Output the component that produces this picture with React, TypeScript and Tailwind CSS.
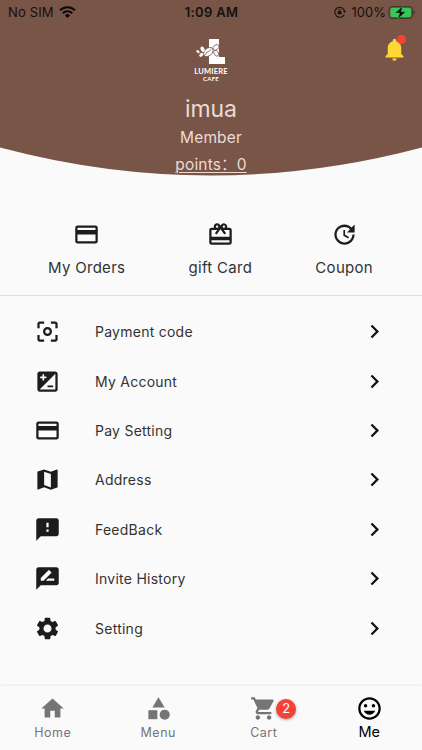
import type { IconType } from "react-icons";
import {
  MdCardGiftcard,
  MdCategory,
  MdCenterFocusWeak,
  MdChevronRight,
  MdCreditCard,
  MdFeedback,
  MdHome,
  MdIso,
  MdMap,
  MdNotifications,
  MdRateReview,
  MdSettings,
  MdShoppingCart,
  MdTagFaces,
  MdUpdate,
} from "react-icons/md";

type Item = { label: string; icon: IconType };

const shortcuts: Item[] = [
  { label: "My Orders", icon: MdCreditCard },
  { label: "gift Card", icon: MdCardGiftcard },
  { label: "Coupon", icon: MdUpdate },
];

const menu: Item[] = [
  { label: "Payment code", icon: MdCenterFocusWeak },
  { label: "My Account", icon: MdIso },
  { label: "Pay Setting", icon: MdCreditCard },
  { label: "Address", icon: MdMap },
  { label: "FeedBack", icon: MdFeedback },
  { label: "Invite History", icon: MdRateReview },
  { label: "Setting", icon: MdSettings },
];

const tabs: (Item & { badge?: number; active?: boolean })[] = [
  { label: "Home", icon: MdHome },
  { label: "Menu", icon: MdCategory },
  { label: "Cart", icon: MdShoppingCart, badge: 2 },
  { label: "Me", icon: MdTagFaces, active: true },
];

function StatusBar() {
  return (
    <div className="grid h-6 grid-cols-3 items-center pl-2 pr-[7px] text-[13px] leading-6 text-[#15100e]">
      <div className="flex items-center gap-[5px]">
        <span className="tracking-[0.15px]">No SIM</span>
        <svg width="17" height="12" viewBox="0 0 17 12" fill="none" stroke="#0c0908" strokeWidth="2.2">
          <path d="M1 4.3a10.8 10.8 0 0 1 15 0" />
          <path d="M3.7 7.2a6.9 6.9 0 0 1 9.6 0" />
          <path d="M8.5 12 5.9 9.4a3.7 3.7 0 0 1 5.2 0z" fill="#0c0908" stroke="none" />
        </svg>
      </div>
      <span className="text-center font-semibold tracking-[0.35px]">1:09 AM</span>
      <div className="flex items-center justify-end">
        <svg width="12" height="12" viewBox="0 0 12 12" fill="none" stroke="#15100e" strokeWidth="1.1">
          <path d="M10.3 8.4A5 5 0 1 1 10.6 5" />
          <path d="M9 5h3l-1.5 2z" fill="#15100e" stroke="none" />
          <rect x="3.7" y="5.2" width="3.8" height="3" fill="#15100e" stroke="none" />
          <path d="M4.5 5.3V4.4a1.1 1.1 0 0 1 2.2 0v.9" strokeWidth=".8" />
        </svg>
        <span className="ml-[6px] mr-[2px]">100%</span>
        <svg width="27" height="13" viewBox="0 0 27 13">
          <rect x="1" y=".6" width="23.4" height="11.8" rx="3" fill="none" stroke="#40302a" />
          <rect x="2.4" y="2" width="20.6" height="9" rx="1.8" fill="#35c759" />
          <path d="M25.6 4.4c1.6.6 1.6 3.6 0 4.2z" fill="#40302a" />
          <path d="M14.8 0 7.2 7h4.4L9.800 13 17.600 5.800h-4.400z" fill="#0c0908" stroke="#35c759" strokeWidth=".5" />
        </svg>
      </div>
    </div>
  );
}

function Logo() {
  return (
    <div className="flex flex-col items-center text-white">
      <svg width="30" height="26" viewBox="0 0 30 26" fill="#fff">
        <path d="M13 0h10v18h6v7H13z" />
        <g stroke="#795548" strokeWidth=".8">
          <ellipse cx="12.3" cy="13" rx="3.7" ry="5.4" transform="rotate(48 12.3 13)" />
          <ellipse cx="20" cy="8.4" rx="2.4" ry="3.3" transform="rotate(50 20 8.4)" />
          <ellipse cx="20.2" cy="14.2" rx="2.1" ry="3.2" transform="rotate(-35 20.2 14.2)" />
          <path d="M8.8 16c2-.8 1.2-3.2 3.4-3.4s1.2-1.7 3.2-2.4" fill="none" />
        </g>
        <ellipse cx="6.6" cy="10.2" rx="1.9" ry="2.8" transform="rotate(-25 6.6 10.2)" />
        <ellipse cx="5.3" cy="15.8" rx="1.7" ry="2.3" transform="rotate(50 5.3 15.8)" />
        <ellipse cx="2" cy="12.6" rx="1.2" ry="1.8" transform="rotate(-50 2 12.6)" />
      </svg>
      <span className="mt-[2px] font-[Lato,sans-serif] text-[7.5px] font-bold leading-[9px] tracking-[0.2px]">LUMIERE</span>
      <span className="font-[Lato,sans-serif] text-[6px] font-bold leading-[6px] tracking-[0.3px]">CAFE</span>
    </div>
  );
}

function Header() {
  return (
    <header className="relative h-[176px] shrink-0">
      {/* curved background */}
      <svg className="absolute inset-0" width="422" height="176" viewBox="0 0 422 176" fill="#795548">
        <path d="M0 0V147.5Q211 203.5 422 147.5V0Z" />
      </svg>
      <div className="relative">
        <StatusBar />
        <div className="flex flex-col items-center pt-[15px] text-[#eadbd5]">
          <Logo />
          <h1 className="mt-[13px] text-[23px] leading-7 tracking-[-0.1px]">imua</h1>
          <p className="mt-[3px] text-[15.5px] leading-6 tracking-[0.15px]">Member</p>
          <p className="mt-[3px] whitespace-pre text-[15.5px] leading-6 tracking-[0.15px] underline decoration-1 underline-offset-2">points：0</p>
        </div>
        <button className="absolute right-[14px] top-[36px]">
          <MdNotifications size={27} color="#fdd835" />
          <span className="absolute right-[2px] top-[-1px] size-[9px] rounded-full bg-[#f44336]" />
        </button>
      </div>
    </header>
  );
}

export default function App() {
  return (
    <div className="flex h-[750px] w-[422px] flex-col overflow-hidden bg-[#fafafa] font-[Inter,'Noto_Sans_CJK_SC',sans-serif] text-[#333]">
      <Header />

      <section className="flex h-[120px] shrink-0 justify-between border-b border-[#e0e0e0] pl-12 pr-[49px] pt-[44.5px]">
        {shortcuts.map(({ label, icon: Icon }) => (
          <button key={label} className="flex flex-col items-center">
            <Icon size={27} color="#1c1c1c" />
            <span className="mt-[8.5px] text-[15px] leading-6 tracking-[0.3px]">{label}</span>
          </button>
        ))}
      </section>

      <ul className="flex-1 pt-[11px]">
        {menu.map(({ label, icon: Icon }) => (
          <li key={label} className="flex h-[49.4px] items-center px-[34px]">
            <Icon size={27} color="#1c1c1c" />
            <span className="ml-[34px] flex-1 text-[14px] tracking-[0.25px]">{label}</span>
            <MdChevronRight size={27} color="#111" />
          </li>
        ))}
      </ul>

      <nav className="grid h-16 shrink-0 grid-cols-4 shadow-[0_-1px_2px_rgba(0,0,0,0.08)]">
        {tabs.map(({ label, icon: Icon, badge, active }) => (
          <button
            key={label}
            className={`flex flex-col items-center pt-[9px] ${active ? "text-black" : "text-[#757575]"}`}
          >
            <span className="relative">
              <Icon size={27} />
              {badge && (
                <span className="absolute left-[26px] top-[4px] flex size-5 items-center justify-center rounded-full bg-[#f44336] text-[13px] text-white shadow-[0_1px_3px_rgba(0,0,0,0.35)]">
                  {badge}
                </span>
              )}
            </span>
            <span className={active ? "text-[14.5px] leading-[20px]" : "text-[12.5px] leading-[22px] tracking-[0.5px]"}>
              {label}
            </span>
          </button>
        ))}
      </nav>
    </div>
  );
}
